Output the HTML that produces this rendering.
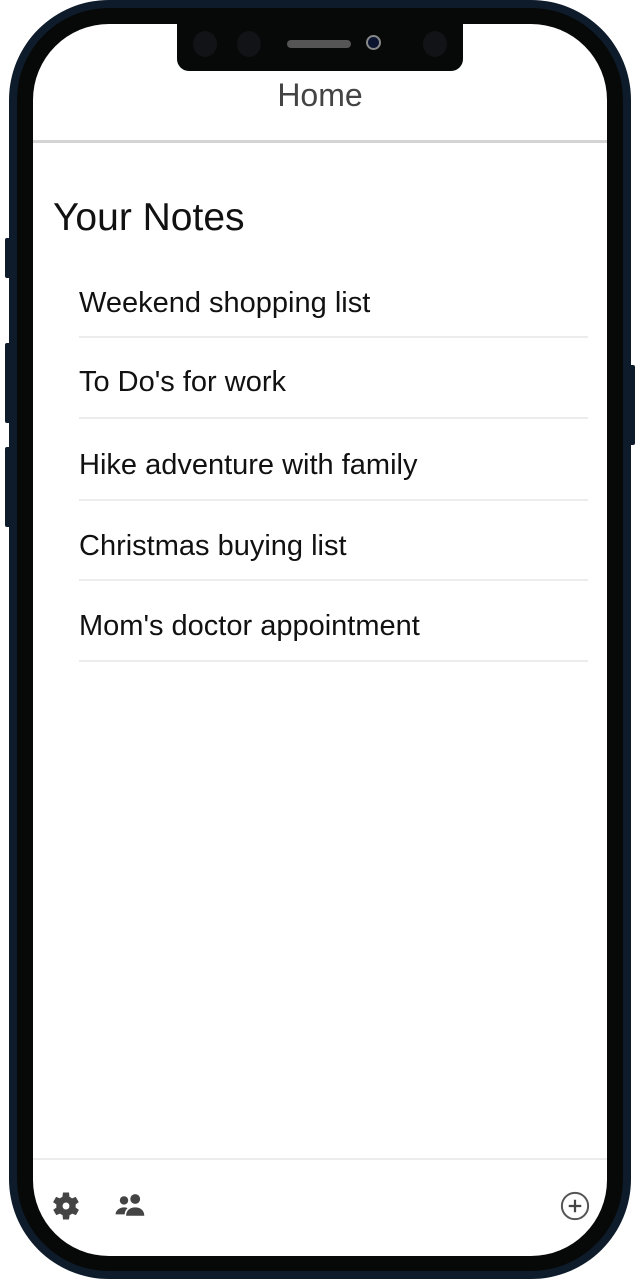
<!DOCTYPE html>
<html><head><style>
*{margin:0;padding:0;box-sizing:border-box}
body{width:640px;height:1280px;background:#fff;position:relative;overflow:hidden;font-family:"Liberation Sans",sans-serif}
.btn{position:absolute;background:#0d1b2a;border-radius:2px}
.outer{position:absolute;left:9px;top:0;width:622px;height:1279px;background:#0d1b2a;border-radius:100px}
.inner{position:absolute;left:17px;top:8px;width:606px;height:1263px;background:#070808;border-radius:92px}
.screen{position:absolute;left:33px;top:24px;width:574px;height:1232px;background:#fff;border-radius:76px;overflow:hidden}
.notch{position:absolute;left:177px;top:20px;width:286px;height:51px;background:#070808;border-radius:0 0 12px 12px}
.dot{position:absolute;top:11px;width:24px;height:26px;border-radius:50%;background:#121316}
.home{position:absolute;top:77px;left:0;width:640px;text-align:center;font-size:32px;color:#444}
.hl{position:absolute;left:33px;width:574px;top:140px;height:3px;background:#d4d4d4}
h1{position:absolute;left:53px;top:196px;font-size:39px;font-weight:normal;color:#111}
.it{position:absolute;left:79px;font-size:29px;color:#111}
.sep{position:absolute;left:79px;width:509px;height:2px;background:#ececec}
</style></head><body>
<div class="btn" style="left:5px;top:238px;width:6px;height:40px"></div>
<div class="btn" style="left:5px;top:343px;width:6px;height:80px"></div>
<div class="btn" style="left:5px;top:447px;width:6px;height:80px"></div>
<div class="btn" style="left:629px;top:365px;width:6px;height:80px"></div>
<div class="outer"></div>
<div class="inner"></div>
<div class="screen"></div>
<div class="notch">
<div class="dot" style="left:16px"></div>
<div class="dot" style="left:60px"></div>
<div class="dot" style="left:246px"></div>
<div style="position:absolute;left:110px;top:20px;width:64px;height:8px;border-radius:4px;background:#555"></div>
<div style="position:absolute;left:189px;top:15px;width:15px;height:15px;border-radius:50%;border:2px solid #888;background:#0b1530"></div>
</div>
<div class="home">Home</div>
<div class="hl"></div>
<h1>Your Notes</h1>
<div class="it" style="top:287px">Weekend shopping list</div><div class="sep" style="top:336px"></div>
<div class="it" style="top:366px">To Do's for work</div><div class="sep" style="top:417px"></div>
<div class="it" style="top:449px">Hike adventure with family</div><div class="sep" style="top:499px"></div>
<div class="it" style="top:530px">Christmas buying list</div><div class="sep" style="top:579px"></div>
<div class="it" style="top:610px">Mom's doctor appointment</div><div class="sep" style="top:660px"></div>
<div style="position:absolute;left:33px;width:574px;top:1158px;height:2px;background:#ececec"></div>
<svg style="position:absolute;left:48px;top:1188px" width="36" height="36" viewBox="0 0 24 24"><path fill="#444" d="M19.4 13a7.5 7.5 0 0 0 0-2l2.1-1.6-2-3.5-2.5 1a7 7 0 0 0-1.7-1L15 3h-4l-.4 2.9a7 7 0 0 0-1.7 1l-2.5-1-2 3.5L6.6 11a7.5 7.5 0 0 0 0 2l-2.1 1.6 2 3.5 2.5-1a7 7 0 0 0 1.7 1L11 21h4l.4-2.9a7 7 0 0 0 1.7-1l2.5 1 2-3.5z" transform="translate(-1 0)"/><circle cx="12" cy="12" r="2.3" fill="#fff"/></svg>
<svg style="position:absolute;left:114px;top:1192px" width="34" height="28" viewBox="0 0 24 20"><circle cx="7" cy="6" r="3" fill="#444"/><circle cx="15" cy="5" r="3.5" fill="#444"/><path fill="#444" d="M1 16c0-3 3-5 6-5 1 0 2 .2 2.5.5C8 13 7.5 14.5 7.5 16zM8.5 17c0-4 3-6 6.5-6s6.5 2 6.5 6z"/></svg>
<svg style="position:absolute;left:560px;top:1191px" width="30" height="30" viewBox="0 0 24 24"><circle cx="12" cy="12" r="10.5" fill="none" stroke="#555" stroke-width="1.6"/><path d="M12 7v10M7 12h10" stroke="#444" stroke-width="1.8"/></svg>
</body></html>
